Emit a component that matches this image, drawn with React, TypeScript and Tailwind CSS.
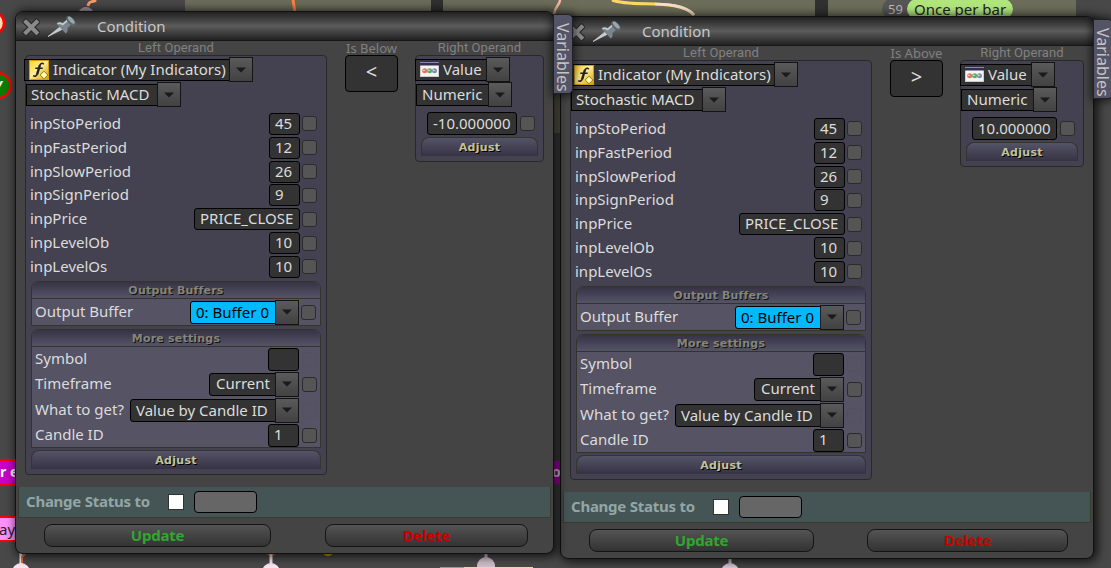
type Param = { label: string; value: string };

type ConditionProps = {
  className: string;
  operator: string;
  operatorLabel: string;
  value: string;
  valueWidth: string;
  rightWidth: string;
  updateWidth: string;
  deleteClass: string;
};

const params: Param[] = [
  { label: "inpStoPeriod", value: "45" },
  { label: "inpFastPeriod", value: "12" },
  { label: "inpSlowPeriod", value: "26" },
  { label: "inpSignPeriod", value: "9" },
  { label: "inpPrice", value: "PRICE_CLOSE" },
  { label: "inpLevelOb", value: "10" },
  { label: "inpLevelOs", value: "10" },
];

function ArrowButton({ className = "" }: { className?: string }) {
  return (
    <span
      className={`flex h-[25px] w-6 shrink-0 items-center justify-center border border-[#141414] bg-linear-to-b from-[#5a5a5a] to-[#424242] ${className}`}
    >
      <svg width="10" height="6" viewBox="0 0 10 6">
        <path d="M0 0.5h10L5 5.5z" fill="#1a1a1a" />
      </svg>
    </span>
  );
}

function Check({ faint = false }: { faint?: boolean }) {
  return (
    <span
      className={`h-[15px] w-[15px] shrink-0 rounded-[3px] border ${
        faint ? "border-[#525062] bg-[#555364]" : "border-[#2b2b2b] bg-[#555]"
      }`}
    />
  );
}

function Field({ children, className = "" }: { children?: string; className?: string }) {
  return (
    <span
      className={`flex shrink-0 items-center whitespace-nowrap rounded-[3px] border border-black bg-[#333] pb-[2px] pl-[5px] ${className}`}
    >
      {children}
    </span>
  );
}

function Label({ children }: { children: string }) {
  return <span className="flex-1 pb-[2px]">{children}</span>;
}

function FunctionIcon() {
  return (
    <svg width="20" height="20" viewBox="0 0 20 20" className="mt-[2px] shrink-0">
      <defs>
        <linearGradient id="fx" x1="0" y1="0" x2="1" y2="1">
          <stop offset="0" stopColor="#ffd21a" />
          <stop offset="0.45" stopColor="#ffee98" />
          <stop offset="1" stopColor="#d99a00" />
        </linearGradient>
      </defs>
      <rect x="0.5" y="0.5" width="19" height="19" fill="url(#fx)" stroke="#d0a010" />
      <path d="M14.8 4.2C13.3 2.6 11.300 3.200 10.600 5.800" fill="none" stroke="#222" strokeWidth="1.500" />
      <path d="M10.900 5L8.200 14.200" fill="none" stroke="#222" strokeWidth="2.400" />
      <path d="M8.400 13.500C7.600 16.200 6 16.800 4.200 15.600M6.300 8.200h7.400" fill="none" stroke="#222" strokeWidth="1.500" />
      <path d="M15 11.200l3.800 3.800-3.800 3.800-3.800-3.800z" fill="#ffffb0" stroke="#8c7a20" />
    </svg>
  );
}

function ValueIcon() {
  return (
    <svg width="19" height="16" viewBox="0 0 19 16" className="mt-px shrink-0">
      <rect x="0.5" y="0.5" width="18" height="15" fill="#f4f4f4" stroke="#ccc" />
      <rect width="19" height="4.500" fill="#36304f" />
      <rect y="1" width="19" height="1" fill="#8b84b5" />
      <circle cx="4.700" cy="9.800" r="2.500" fill="#e8735c" />
      <circle cx="9.600" cy="9.800" r="2.500" fill="#5faa6b" />
      <circle cx="14.500" cy="9.800" r="2.500" fill="#7d8fae" />
      <path d="M3.200 9.300h1.500M8.100 9.300h1.500M13 9.300h1.500" stroke="#fff" />
    </svg>
  );
}

function CloseIcon() {
  return (
    <svg width="18" height="18" viewBox="0 0 18 18" className="mt-px shrink-0">
      <path d="M4 4l10.500 10.500M14.500 4L4 14.500" stroke="#2a2a2a" strokeWidth="6.400" strokeLinecap="square" />
      <path d="M4 4l10.500 10.500M14.500 4L4 14.500" stroke="#8a8a8a" strokeWidth="4" strokeLinecap="square" />
    </svg>
  );
}

function PinIcon() {
  return (
    <svg width="30" height="23" viewBox="0 0 30 23" className="shrink-0">
      <path d="M1 21.500L13 12l2 2.400z" fill="#c8cdd0" stroke="#c8cdd0" strokeWidth="0.800" />
      <path d="M9.500 8.500c2-1.800 4-1.800 6-.6l5-4 4.600 5-4.600 4c.5 2.500 0 4.300-1.700 5.600z" fill="#7b868c" />
      <path d="M10.500 8.700c2-1 3.500-.5 5.200.8l5-4.300" fill="none" stroke="#c4ced2" strokeWidth="1.600" />
      <ellipse cx="24" cy="6" rx="3.200" ry="6" transform="rotate(-43 24 6)" fill="#5b676d" />
      <ellipse cx="24.300" cy="5.200" rx="1.800" ry="4.500" transform="rotate(-43 24.300 5.200)" fill="#9ba7ac" />
    </svg>
  );
}

function Adjust({ className = "" }: { className?: string }) {
  return (
    <div
      className={`flex h-[19px] items-center justify-center rounded-t-[8px] border border-b-0 border-[#35352d] bg-linear-to-b from-[#555366] to-[#353344] pt-[2px] font-['DejaVu_Sans'] text-[11px] font-bold tracking-[0.3px] text-[#c3c39b] [text-shadow:1px_1px_0_#000] ${className}`}
    >
      Adjust
    </div>
  );
}

function SectionTitle({ children }: { children: string }) {
  return (
    <div className="flex h-[17px] items-center justify-center border-b border-[#34342d] bg-linear-to-b from-[#353344] to-[#555366] pt-[2px] font-['DejaVu_Sans'] text-[11px] font-bold tracking-[0.2px] text-[#85857a] [text-shadow:1px_1px_0_#111]">
      {children}
    </div>
  );
}

function LeftOperand() {
  return (
    <div className="h-[420px] w-[302px] shrink-0 rounded-[4px] border border-[#292929] bg-[#444250]">
      <div className="-ml-[2px] mt-px flex h-[25px] items-center">
        <span className="flex h-[22px] w-[206px] items-center gap-1 border border-black bg-[#333] pb-[2px] pl-1">
          <FunctionIcon />
          Indicator (My Indicators)
        </span>
        <ArrowButton className="-ml-px" />
      </div>
      <div className="flex h-[25px] items-center">
        <span className="flex h-[22px] w-[132px] items-center border border-black bg-[#333] pb-[2px] pl-1">
          Stochastic MACD
        </span>
        <ArrowButton className="-ml-px" />
      </div>
      <div className="mt-[5px]">
        {params.map(({ label, value }) => (
          <div key={label} className="flex h-[23.84px] items-center pl-1 pr-[9px]">
            <Label>{label}</Label>
            <Field
              className={`mr-[2px] h-[22px] ${value.length > 2 ? "w-[106px]" : "w-[31px]"}`}
            >
              {value}
            </Field>
            <Check />
          </div>
        ))}
      </div>

      <div className="ml-[5px] mt-[2px] h-[45px] w-[290px] overflow-hidden rounded-t-[7px] border border-[#34342d] bg-[#555364]">
        <SectionTitle>Output Buffers</SectionTitle>
        <div className="flex h-[27px] items-center pl-[3px] pr-1">
          <Label>Output Buffer</Label>
          <span className="flex h-[23px] w-[86px] items-center rounded-l-[3px] border border-black bg-[#00b9ff] pb-px pl-[5px] text-black">
            0: Buffer 0
          </span>
          <ArrowButton className="-ml-px mr-[2px]" />
          <Check />
        </div>
      </div>

      <div className="ml-[5px] mt-[3px] h-[119px] w-[290px] overflow-hidden rounded-t-[7px] border border-[#34342d] bg-[#555364]">
        <SectionTitle>More settings</SectionTitle>
        <div className="flex h-[25px] items-center pl-[3px] pr-[3px]">
          <Label>Symbol</Label>
          <Field className="mr-[3px] h-[23px] w-[31px]" />
          <Check faint />
        </div>
        <div className="flex h-[25px] items-center pl-[3px] pr-[3px]">
          <Label>Timeframe</Label>
          <Field className="h-[23px] w-[67px] rounded-r-none pl-[6px]">Current</Field>
          <ArrowButton className="-ml-px mr-[3px]" />
          <Check />
        </div>
        <div className="mt-px flex h-[25px] items-center pl-[3px] pr-[3px]">
          <Label>What to get?</Label>
          <Field className="h-[23px] w-[146px] rounded-r-none pb-px">Value by Candle ID</Field>
          <ArrowButton className="-ml-px mr-[3px]" />
          <Check faint />
        </div>
        <div className="flex h-[25px] items-center pl-[3px] pr-[3px]">
          <Label>Candle ID</Label>
          <Field className="mr-[3px] h-[23px] w-[31px]">1</Field>
          <Check />
        </div>
      </div>
      <Adjust className="ml-[5px] mt-[2px] w-[290px]" />
    </div>
  );
}

function RightOperand({
  value,
  valueWidth,
  className,
}: {
  value: string;
  valueWidth: string;
  className: string;
}) {
  return (
    <div
      className={`h-[107px] shrink-0 rounded-[4px] border border-[#292929] bg-[#444250] ${className}`}
    >
      <div className="-ml-px mt-px flex h-[25px] items-center">
        <span className="flex h-[22px] w-[72px] items-center gap-1 border border-black bg-[#333] pb-[2px] pl-1">
          <ValueIcon />
          Value
        </span>
        <ArrowButton className="-ml-px" />
      </div>
      <div className="flex h-[25px] items-center">
        <span className="flex h-[22px] w-[73px] items-center border border-black bg-[#333] pb-[2px] pl-[5px]">
          Numeric
        </span>
        <ArrowButton className="-ml-px" />
      </div>
      <div className="mt-[5px] flex items-center justify-end pr-2">
        <Field className={`mr-[3px] h-[23px] ${valueWidth}`}>{value}</Field>
        <Check />
      </div>
      <Adjust className="mx-[5px] mt-[2px]" />
    </div>
  );
}

function ConditionWindow({
  className,
  operator,
  operatorLabel,
  value,
  valueWidth,
  rightWidth,
  updateWidth,
  deleteClass,
}: ConditionProps) {
  return (
    <section
      className={`absolute h-[543px] rounded-[8px] border border-[#111] bg-[#444] shadow-[2px_1px_10px_2px_rgba(0,0,0,0.7)] ${className}`}
    >
      <header className="flex h-[29px] items-center rounded-t-[7px] border-b border-[#161616] bg-linear-to-b from-[#222] via-[#5c5c5c] to-[#222] pl-[6px]">
        <CloseIcon />
        <span className="ml-[7px]">
          <PinIcon />
        </span>
        <h2 className="ml-[20px] text-[15px] text-[#c8c8c8]">Condition</h2>
      </header>

      <div className="flex h-[16px] pl-[9px] text-[#808080]">
        <div className="w-[302px] text-center font-['Roboto'] text-[13px] leading-[13px] tracking-[0.1px]">
          Left Operand
        </div>
        <div className="ml-[18px] w-[53px] whitespace-nowrap text-center text-[13px] leading-[14px]">
          {operatorLabel}
        </div>
        <div
          className={`ml-[17px] text-center font-['Roboto'] text-[13px] leading-[13px] tracking-[0.1px] ${rightWidth}`}
        >
          Right Operand
        </div>
      </div>
      <div className="-mt-[2px] flex items-start pl-[9px]">
        <LeftOperand />
        <button className="ml-[18px] h-[37px] w-[53px] rounded-[4px] border border-black bg-[#333] pb-[3px] text-[20px] leading-none text-[#ddd]">
          {operator}
        </button>
        <RightOperand value={value} valueWidth={valueWidth} className={`ml-[17px] ${rightWidth}`} />
      </div>

      <div className="mx-[2px] mt-[12px] flex h-[31px] items-center border border-t-0 border-[#383c2f] bg-[#455555] pl-[7px]">
        <span className="w-[142px] pb-[2px] font-bold tracking-[-0.25px] text-[#93a6a6]">
          Change Status to
        </span>
        <span className="h-4 w-4 border border-[#333] bg-white" />
        <span className="ml-[10px] h-[22px] w-[63px] rounded-[4px] border border-black bg-[#666]" />
      </div>
      <div className="mt-[6px] flex pl-[28px] font-bold tracking-[-0.25px]">
        <button
          className={`h-[23px] rounded-[8px] border border-[#151515] bg-linear-to-b from-[#545454] to-[#333] pb-[2px] leading-[18px] text-[#32a532] ${updateWidth}`}
        >
          Update
        </button>
        <button
          className={`h-[23px] rounded-[8px] border border-[#151515] bg-linear-to-b from-[#545454] to-[#333] pb-[2px] leading-[18px] text-[#c80000] ${deleteClass}`}
        >
          Delete
        </button>
      </div>
    </section>
  );
}

function VariablesTab({ className }: { className: string }) {
  return (
    <div
      className={`absolute flex h-[80px] w-[20px] items-center justify-center rounded-r-[5px] border border-[#20202a] bg-[#555366] pt-[7px] text-[16px] leading-[16px] text-[#c4c4c4] shadow-[0_0_8px_2px_rgba(0,0,0,0.6)] ${className}`}
    >
      <span className="whitespace-nowrap [writing-mode:vertical-rl]">Variables</span>
    </div>
  );
}

// Blocks and wires of the diagram that show around the windows
function Canvas() {
  const wires = [
    { x: 21, y: 572, color: "#f7e4ee" },
    { x: 271, y: 572, color: "#f7e4ee" },
    { x: 486, y: 566, color: "#cdbccb" },
    { x: 730, y: 572, color: "#e0cfe0" },
  ];
  return (
    <svg width="1111" height="568" className="absolute inset-0">
      <rect width="1111" height="568" fill="#484848" />
      <rect x="185" width="246" height="133" fill="#6c6c5a" />
      <rect x="443" width="372" height="133" fill="#6c6c5a" />
      <rect x="828" width="248" height="133" fill="#6c6c5a" />
      <rect x="431" width="12" height="133" fill="#303030" />
      <rect x="815" width="13" height="133" fill="#303030" />
      <path d="M96 0c-4 3-7 0-8 6" fill="none" stroke="#ff9a66" strokeWidth="3" />
      <circle cx="86" cy="15" r="8" fill="#a795a6" />
      <path d="M293 0l2 12" fill="none" stroke="#ff8540" strokeWidth="3" />
      <path d="M560 0c0 5-5 6-6 14" fill="none" stroke="#f0b9a0" strokeWidth="2.500" />
      <path d="M612 0c20 8 68-2 82 15" fill="none" stroke="#ffd56b" strokeWidth="3" />
      <path d="M655 4c20 0 32 3 39 11" fill="none" stroke="#f5ddd0" strokeWidth="2.500" />
      <circle cx="-7" cy="23" r="11" fill="#ffe0b5" stroke="#f00" strokeWidth="2.500" />
      <circle cx="-2" cy="85.500" r="12.500" fill="#087d08" stroke="#f00" strokeWidth="2.500" />
      <rect x="-2" y="460" width="30" height="25" fill="#c800c8" stroke="#f00" strokeWidth="2" />
      <rect x="-2" y="517" width="30" height="24" fill="#ff90ff" stroke="#f00" strokeWidth="2" />
      <rect x="550" y="461" width="20" height="23" fill="#c800c8" />
      <circle cx="328" cy="549" r="7" fill="#d7a900" />
      <circle cx="271" cy="549" r="7" fill="#d95a13" />
      {wires.map((w) => (
        <g key={w.x}>
          <path d={`M${w.x} 550v20`} stroke={w.color} strokeWidth="3" />
          <circle cx={w.x} cy={w.y} r="9" fill={w.color} />
        </g>
      ))}
      <path d="M27 552l-5 5v6" fill="none" stroke="#dc6b38" strokeWidth="2" />
      <rect x="440" y="567" width="25" height="5" fill="#999" />
      <rect x="464" y="567" width="69" height="5" fill="#f5d5a0" />
    </svg>
  );
}

export default function App() {
  return (
    <main className="relative h-[568px] w-[1111px] overflow-hidden bg-[#484848] font-['Noto_Sans',sans-serif] text-[15px] leading-[20px] text-[#dcdcdc]">
      <Canvas />
      <span className="absolute -left-[5px] top-[74px] text-[14px] font-bold italic text-white">y</span>
      <span className="absolute left-0 top-[462px] text-[14px] font-bold text-white">r e</span>
      <span className="absolute -left-px top-[519px] text-[15px] text-[#222]">ay</span>
      <span className="absolute left-[552px] top-[462px] text-[14px] font-bold text-white">o</span>
      <div className="absolute -top-px left-[882px] flex items-center whitespace-nowrap rounded-full bg-[#555]">
        <span className="w-[25px] pl-[6px] text-[13px] text-[#bbb]">59</span>
        <span className="rounded-full bg-[#b0e57c] px-[7px] text-[15px] text-[#222]">
          Once per bar
        </span>
      </div>

      <ConditionWindow
        className="left-[560px] top-[16px] w-[534px]"
        operator=">"
        operatorLabel="Is Above"
        value="10.000000"
        valueWidth="w-[85px]"
        rightWidth="w-[124px]"
        updateWidth="w-[225px]"
        deleteClass="ml-[53px] w-[201px]"
      />
      <ConditionWindow
        className="left-[15px] top-[11px] w-[539px]"
        operator="<"
        operatorLabel="Is Below"
        value="-10.000000"
        valueWidth="w-[90px]"
        rightWidth="w-[129px]"
        updateWidth="w-[227px]"
        deleteClass="ml-[54px] w-[203px]"
      />
      <VariablesTab className="left-[553px] top-[14px]" />
      <VariablesTab className="left-[1093px] top-[19px]" />
    </main>
  );
}
